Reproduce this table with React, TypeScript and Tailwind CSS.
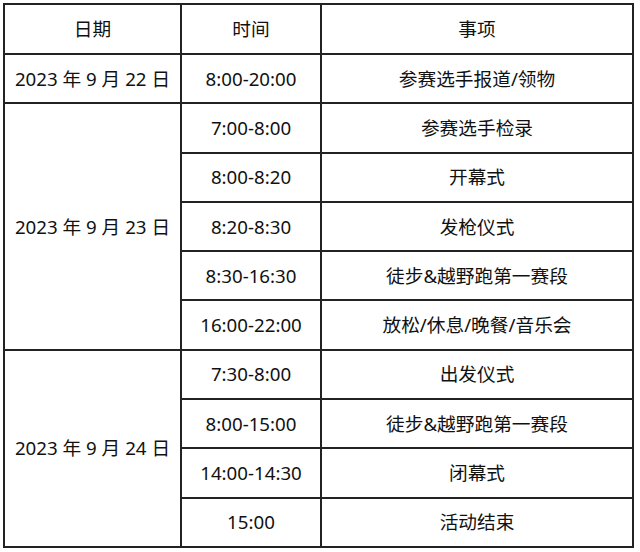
import React from "react";

type Item = { time: string; task: string };
type Day = { date: string; items: Item[] };

const days: Day[] = [
  { date: "2023 年 9 月 22 日", items: [{ time: "8:00-20:00", task: "参赛选手报道/领物" }] },
  {
    date: "2023 年 9 月 23 日",
    items: [
      { time: "7:00-8:00", task: "参赛选手检录" },
      { time: "8:00-8:20", task: "开幕式" },
      { time: "8:20-8:30", task: "发枪仪式" },
      { time: "8:30-16:30", task: "徒步&越野跑第一赛段" },
      { time: "16:00-22:00", task: "放松/休息/晚餐/音乐会" },
    ],
  },
  {
    date: "2023 年 9 月 24 日",
    items: [
      { time: "7:30-8:00", task: "出发仪式" },
      { time: "8:00-15:00", task: "徒步&越野跑第一赛段" },
      { time: "14:00-14:30", task: "闭幕式" },
      { time: "15:00", task: "活动结束" },
    ],
  },
];

const cell = "border-2 border-[#222] text-center align-middle p-0";

export default function App() {
  return (
    <div
      className="w-[640px] h-[552px] bg-white pt-[3px] pl-[3px] text-[18.7px] text-[#111]"
      style={{ fontFamily: '"Noto Sans", "Noto Sans CJK SC", sans-serif' }}
    >
      <table className="w-[631px] border-collapse table-fixed">
        <colgroup>
          <col className="w-[177px]" />
          <col className="w-[140px]" />
          <col />
        </colgroup>
        <thead>
          <tr className="h-[50px]">
            <th className={`${cell} font-normal`}>日期</th>
            <th className={`${cell} font-normal`}>时间</th>
            <th className={`${cell} font-normal`}>事项</th>
          </tr>
        </thead>
        <tbody>
          {days.map((day) =>
            day.items.map((item, i) => (
              <tr key={day.date + item.time} className="h-[49.3px]">
                {i === 0 && (
                  <td className={cell} rowSpan={day.items.length}>
                    {day.date}
                  </td>
                )}
                <td className={cell}>{item.time}</td>
                <td className={cell}>{item.task}</td>
              </tr>
            ))
          )}
        </tbody>
      </table>
    </div>
  );
}
